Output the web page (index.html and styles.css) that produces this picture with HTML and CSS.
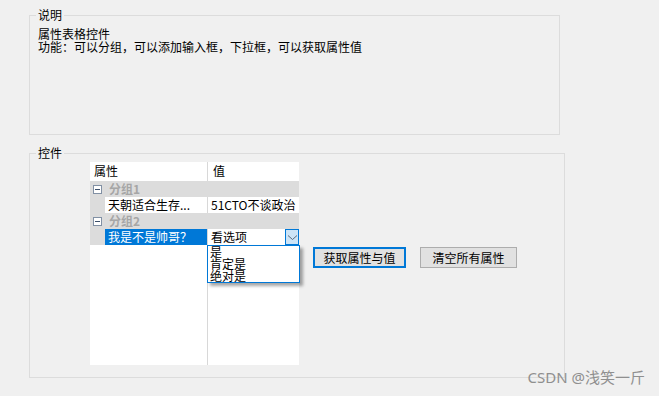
FILE: index.html
```html
<!DOCTYPE html>
<html lang="zh-CN">
<head>
    <meta charset="UTF-8">
    <title>属性表格控件</title>
    <link rel="stylesheet" href="styles.css">
</head>
<body>
    <fieldset class="grupo grupoInfo">
        <legend>说明</legend>
        <p class="texto">属性表格控件<br>功能：可以分组，可以添加输入框，下拉框，可以获取属性值</p>
    </fieldset>

    <fieldset class="grupo grupoControle">
        <legend>控件</legend>
        <div class="linhaControle">
            <div class="propGrid">
                <div class="linha cabecalho">
                    <div class="celNome">属性</div>
                    <div class="celValor">值</div>
                </div>
                <div class="linha categoria">
                    <div class="margem"><span class="menos"></span></div>
                    <div class="celNome">分组1</div>
                    <div class="celValor"></div>
                </div>
                <div class="linha item">
                    <div class="margem"></div>
                    <div class="celNome">天朝适合生存...</div>
                    <div class="celValor">51CTO不谈政治</div>
                </div>
                <div class="linha categoria">
                    <div class="margem"><span class="menos"></span></div>
                    <div class="celNome">分组2</div>
                    <div class="celValor"></div>
                </div>
                <div class="linha item selecionado">
                    <div class="margem"></div>
                    <div class="celNome">我是不是帅哥？</div>
                    <div class="celValor combo">
                        <span>看选项</span>
                        <span class="seta">
                            <svg width="11" height="7" viewBox="0 0 11 7"><path d="M1 1.5 L5.5 5.5 L10 1.5" fill="none" stroke="#5a6a7c" stroke-width="1"/></svg>
                        </span>
                        <ul class="lista">
                            <li>是</li>
                            <li>肯定是</li>
                            <li>绝对是</li>
                        </ul>
                    </div>
                </div>
                <div class="resto">
                    <div class="restoNome"></div>
                    <div class="restoValor"></div>
                </div>
            </div>
            <div class="botoes">
                <button class="botao ativo">获取属性与值</button>
                <button class="botao">清空所有属性</button>
            </div>
        </div>
    </fieldset>

    <div class="marca">CSDN @浅笑一斤</div>
</body>
</html>
```

FILE: styles.css
```css
body {
    margin: 0;
    padding: 8px 0 0 29px;
    width: 659px;
    height: 396px;
    box-sizing: border-box;
    background-color: #f0f0f0;
    font-family: "Noto Sans CJK SC", "Noto Sans", sans-serif;
    font-size: 12px;
    color: #000;
    overflow: hidden;
    position: relative;
}

.grupo {
    margin: 0;
    padding: 0;
    border: 1px solid #dcdcdc;
    box-sizing: border-box;
}

.grupo legend {
    margin-left: 6px;
    padding: 0 2px;
    line-height: 14px;
    height: 14px;
}

.grupoInfo {
    width: 531px;
    height: 127px;
}

.texto {
    margin: 5px 0 0 8px;
    line-height: 13px;
}

.grupoControle {
    margin-top: 11px;
    width: 536px;
    height: 232px;
}

.linhaControle {
    display: flex;
    align-items: flex-start;
    padding: 2px 0 0 60px;
}

.propGrid {
    width: 209px;
    height: 203px;
    background: #fff;
    display: flex;
    flex-direction: column;
}

.linha {
    display: flex;
    height: 16px;
    line-height: 16px;
}

.cabecalho {
    height: 19px;
    line-height: 18px;
}

.cabecalho .celNome {
    width: 117px;
    padding-left: 4px;
    box-sizing: border-box;
}

.cabecalho .celValor {
    padding-left: 5px;
}

.margem {
    width: 15px;
    flex-shrink: 0;
    background: #dcdcdc;
    display: flex;
    align-items: center;
    justify-content: center;
}

.menos {
    width: 7px;
    height: 7px;
    border: 1px solid #8190a4;
    background: #fff;
    position: relative;
}

.menos::after {
    content: "";
    position: absolute;
    left: 1px;
    top: 3px;
    width: 5px;
    height: 1px;
    background: #3c4f6a;
}

.celNome {
    width: 102px;
    padding-left: 3px;
    box-sizing: border-box;
    white-space: nowrap;
    overflow: hidden;
    flex-shrink: 0;
}

.celValor {
    flex: 1;
    padding-left: 3px;
    border-left: 1px solid #d8d8d8;
    white-space: nowrap;
}

.categoria {
    background: #dcdcdc;
}

.categoria .celNome {
    width: 194px;
    padding-left: 4px;
    font-weight: bold;
    color: #a6a6a6;
}

.categoria .celValor {
    border-left: none;
}

.item .celNome {
    background: #fff;
}

.item .celValor {
    background: #fff;
}

.selecionado .celNome {
    background: #0078d7;
    color: #fff;
}

.combo {
    position: relative;
    display: flex;
    justify-content: space-between;
}

.seta {
    width: 12px;
    height: 14px;
    border: 1px solid #0078d7;
    background: #cce4f7;
    display: flex;
    align-items: center;
    justify-content: center;
}

.lista {
    position: absolute;
    left: -1px;
    top: 16px;
    width: 89px;
    height: 36px;
    margin: 0;
    padding: 0 0 0 2px;
    list-style: none;
    background: #fff;
    border: 1px solid #0078d7;
    box-shadow: 3px 3px 3px rgba(0, 0, 0, 0.35);
    color: #000;
    z-index: 2;
}

.lista li {
    line-height: 12px;
    height: 12px;
}

.resto {
    flex: 1;
    display: flex;
}

.restoNome {
    width: 117px;
}

.restoValor {
    flex: 1;
    border-left: 1px solid #d8d8d8;
}

.botoes {
    display: flex;
    gap: 14px;
    margin-top: 85px;
    margin-left: 14px;
}

.botao {
    font-family: "Noto Sans CJK SC", "Noto Sans", sans-serif;
    font-size: 12px;
    height: 21px;
    padding: 0;
    background: #e1e1e1;
    border: 1px solid #adadad;
    color: #000;
    width: 97px;
    line-height: 17px;
}

.botao.ativo {
    width: 93px;
    border: 2px solid #0078d7;
}

.marca {
    position: absolute;
    right: 14px;
    bottom: 9px;
    font-family: "Noto Sans", "Noto Sans CJK SC", sans-serif;
    font-size: 15px;
    color: #8f8f8f;
}
```
